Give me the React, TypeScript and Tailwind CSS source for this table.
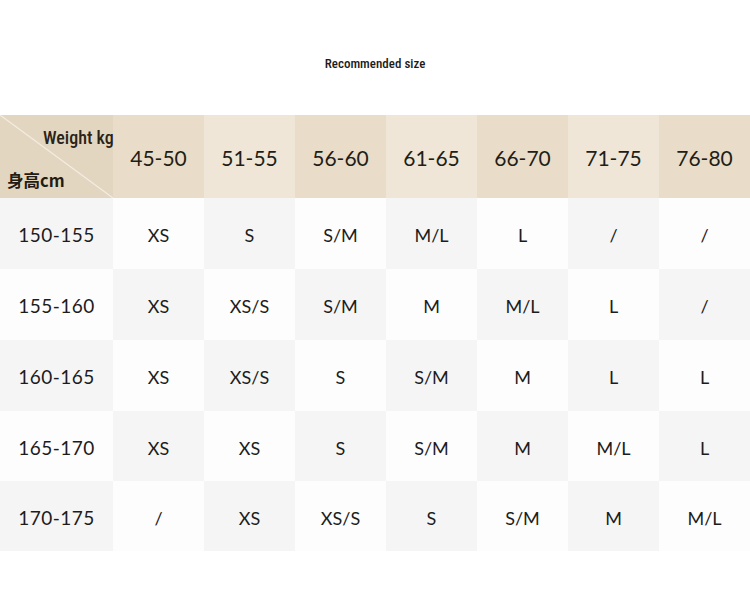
const weights = ['45-50', '51-55', '56-60', '61-65', '66-70', '71-75', '76-80'];

const rows = [
  { h: '150-155', sizes: ['XS', 'S', 'S/M', 'M/L', 'L', '/', '/'] },
  { h: '155-160', sizes: ['XS', 'XS/S', 'S/M', 'M', 'M/L', 'L', '/'] },
  { h: '160-165', sizes: ['XS', 'XS/S', 'S', 'S/M', 'M', 'L', 'L'] },
  { h: '165-170', sizes: ['XS', 'XS', 'S', 'S/M', 'M', 'M/L', 'L'] },
  { h: '170-175', sizes: ['/', 'XS', 'XS/S', 'S', 'S/M', 'M', 'M/L'] },
];

const rowHeights = ['h-[71px]', 'h-[71px]', 'h-[71px]', 'h-[70px]', 'h-[70px]'];

const condensed = "font-['Roboto_Condensed','DejaVu_Sans_Condensed','Liberation_Sans_Narrow',Roboto,sans-serif]";
const cellFont = "font-['Lato','Open_Sans',sans-serif]";

const App = () => {
  return (
    <div className="w-[750px] h-[589px] bg-white overflow-hidden">
      <div className="h-[115px] pt-[56px]">
        <p className={`${condensed} text-center text-[13px] leading-[16px] font-medium text-[#1b1b1b]`}>
          Recommended size
        </p>
      </div>

      <div className="grid grid-cols-[113px_repeat(7,91px)]">
        {/* header */}
        <div className="relative z-10 h-[83px] bg-[#e2d6c1]">
          <svg className="absolute inset-0" width="113" height="83" viewBox="0 0 113 83">
            <line x1="0" y1="0" x2="113" y2="83" stroke="#f3ede2" strokeWidth="1.2" />
          </svg>
          <span className={`${condensed} absolute left-[43px] top-[12px] whitespace-nowrap text-[18px] leading-[22px] font-medium text-[#2a2318]`}>
            Weight kg
          </span>
          <span className="absolute left-[7px] top-[54px] whitespace-nowrap text-[16.5px] leading-[22px] font-bold text-[#221c14] font-['Noto_Sans_CJK_SC',sans-serif]">
            身高cm
          </span>
        </div>
        {weights.map((w, i) => (
          <div
            key={w}
            className={`h-[83px] pt-[2px] flex items-center justify-center ${cellFont} text-[21px] text-[#231d16] ${
              i % 2 === 0 ? 'bg-[#e9ddc9]' : 'bg-[#efe6d8]'
            }`}
          >
            {w}
          </div>
        ))}

        {/* body */}
        {rows.map((r, ri) =>
          [r.h, ...r.sizes].map((v, ci) => (
            <div
              key={`${ri}-${ci}`}
              className={`${rowHeights[ri]} pt-[4px] flex items-center justify-center ${cellFont} ${
                ci === 0 ? 'text-[19px] tracking-[0.5px]' : 'text-[18px]'
              } text-[#1c1c1c] ${(ri + ci) % 2 === 0 ? 'bg-[#f5f5f5]' : 'bg-[#fdfdfd]'}`}
            >
              {v}
            </div>
          ))
        )}
      </div>
    </div>
  );
};

export default App;
